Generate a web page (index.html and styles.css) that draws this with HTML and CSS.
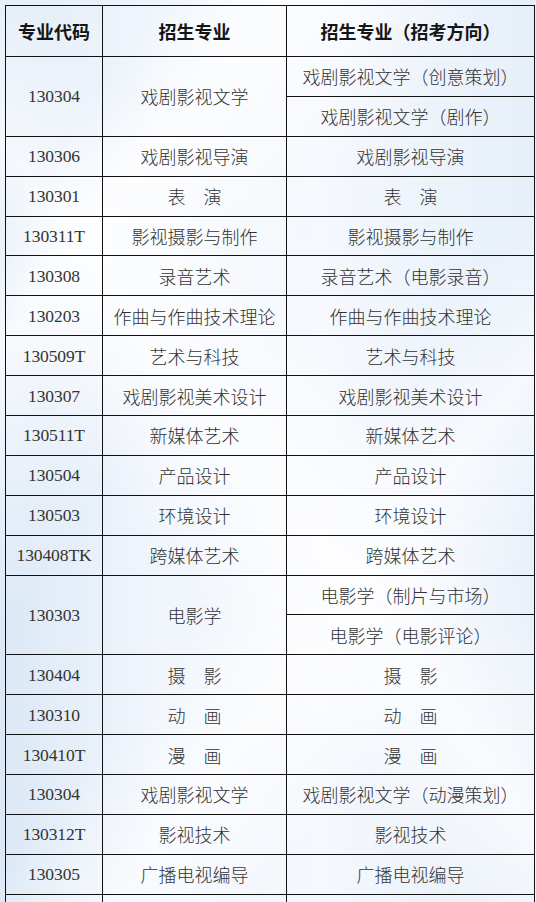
FILE: index.html
```html
<!DOCTYPE html>
<html lang="zh-CN">
<head>
<meta charset="utf-8">
<title>招生专业</title>
<link rel="stylesheet" href="styles.css">
</head>
<body>
<div class="page">
<table class="majors">
  <colgroup>
    <col class="c-code"><col class="c-name"><col class="c-dir">
  </colgroup>
  <thead>
    <tr><th>专业代码</th><th>招生专业</th><th>招生专业（招考方向）</th></tr>
  </thead>
  <tbody>
    <tr><td class="code" rowspan="2">130304</td><td rowspan="2">戏剧影视文学</td><td>戏剧影视文学（创意策划）</td></tr>
    <tr><td>戏剧影视文学（剧作）</td></tr>
    <tr><td class="code">130306</td><td>戏剧影视导演</td><td>戏剧影视导演</td></tr>
    <tr><td class="code">130301</td><td>表&emsp;演</td><td>表&emsp;演</td></tr>
    <tr><td class="code">130311T</td><td>影视摄影与制作</td><td>影视摄影与制作</td></tr>
    <tr><td class="code">130308</td><td>录音艺术</td><td>录音艺术（电影录音）</td></tr>
    <tr><td class="code">130203</td><td>作曲与作曲技术理论</td><td>作曲与作曲技术理论</td></tr>
    <tr><td class="code">130509T</td><td>艺术与科技</td><td>艺术与科技</td></tr>
    <tr><td class="code">130307</td><td>戏剧影视美术设计</td><td>戏剧影视美术设计</td></tr>
    <tr><td class="code">130511T</td><td>新媒体艺术</td><td>新媒体艺术</td></tr>
    <tr><td class="code">130504</td><td>产品设计</td><td>产品设计</td></tr>
    <tr><td class="code">130503</td><td>环境设计</td><td>环境设计</td></tr>
    <tr><td class="code">130408TK</td><td>跨媒体艺术</td><td>跨媒体艺术</td></tr>
    <tr><td class="code" rowspan="2">130303</td><td rowspan="2">电影学</td><td>电影学（制片与市场）</td></tr>
    <tr><td>电影学（电影评论）</td></tr>
    <tr><td class="code">130404</td><td>摄&emsp;影</td><td>摄&emsp;影</td></tr>
    <tr><td class="code">130310</td><td>动&emsp;画</td><td>动&emsp;画</td></tr>
    <tr><td class="code">130410T</td><td>漫&emsp;画</td><td>漫&emsp;画</td></tr>
    <tr><td class="code">130304</td><td>戏剧影视文学</td><td>戏剧影视文学（动漫策划）</td></tr>
    <tr><td class="code">130312T</td><td>影视技术</td><td>影视技术</td></tr>
    <tr><td class="code">130305</td><td>广播电视编导</td><td>广播电视编导</td></tr>
    <tr><td class="code">&nbsp;</td><td>&nbsp;</td><td>&nbsp;</td></tr>
  </tbody>
</table>
</div>
</body>
</html>
```

FILE: styles.css
```css
html, body {
  margin: 0;
  padding: 0;
}
body {
  width: 536px;
  height: 902px;
  overflow: hidden;
  background-color: #e8f1fa;
  background-image:
    linear-gradient(128deg, rgba(255,255,255,0) 0%, rgba(255,255,255,0) 14%, rgba(255,255,255,0.75) 22%, rgba(255,255,255,0.2) 34%, rgba(255,255,255,0) 40%),
    linear-gradient(52deg, rgba(255,255,255,0) 35%, rgba(255,255,255,0.7) 48%, rgba(255,255,255,0.15) 60%, rgba(255,255,255,0) 70%),
    linear-gradient(128deg, rgba(255,255,255,0) 55%, rgba(255,255,255,0.6) 66%, rgba(255,255,255,0) 78%),
    linear-gradient(90deg, #dce8f6 0%, #f1f6fc 30%, #f5f8fd 60%, #e6eff9 100%);
}
.page {
  padding: 5px 0 0 5px;
}
.majors {
  border-collapse: collapse;
  width: 529px;
  table-layout: fixed;
  font-family: "Noto Sans CJK SC", sans-serif;
  color: #333;
}
.c-code { width: 97px; }
.c-name { width: 184px; }
.c-dir { width: 248px; }
.majors th,
.majors td {
  border: 1.6px solid #111;
  text-align: center;
  vertical-align: middle;
  padding: 0;
  white-space: nowrap;
}
.majors th {
  height: 50px;
  font-family: "Noto Sans CJK SC", sans-serif;
  font-weight: 700;
  font-size: 18px;
  color: #151515;
}
.majors td {
  height: 38.9px;
  font-size: 18px;
  font-weight: 300;
  line-height: 20px;
}
.majors .code {
  font-family: "Liberation Serif", "DejaVu Serif", serif;
  font-weight: 400;
  font-size: 17.5px;
  letter-spacing: -0.1px;
  color: #333;
}
```
